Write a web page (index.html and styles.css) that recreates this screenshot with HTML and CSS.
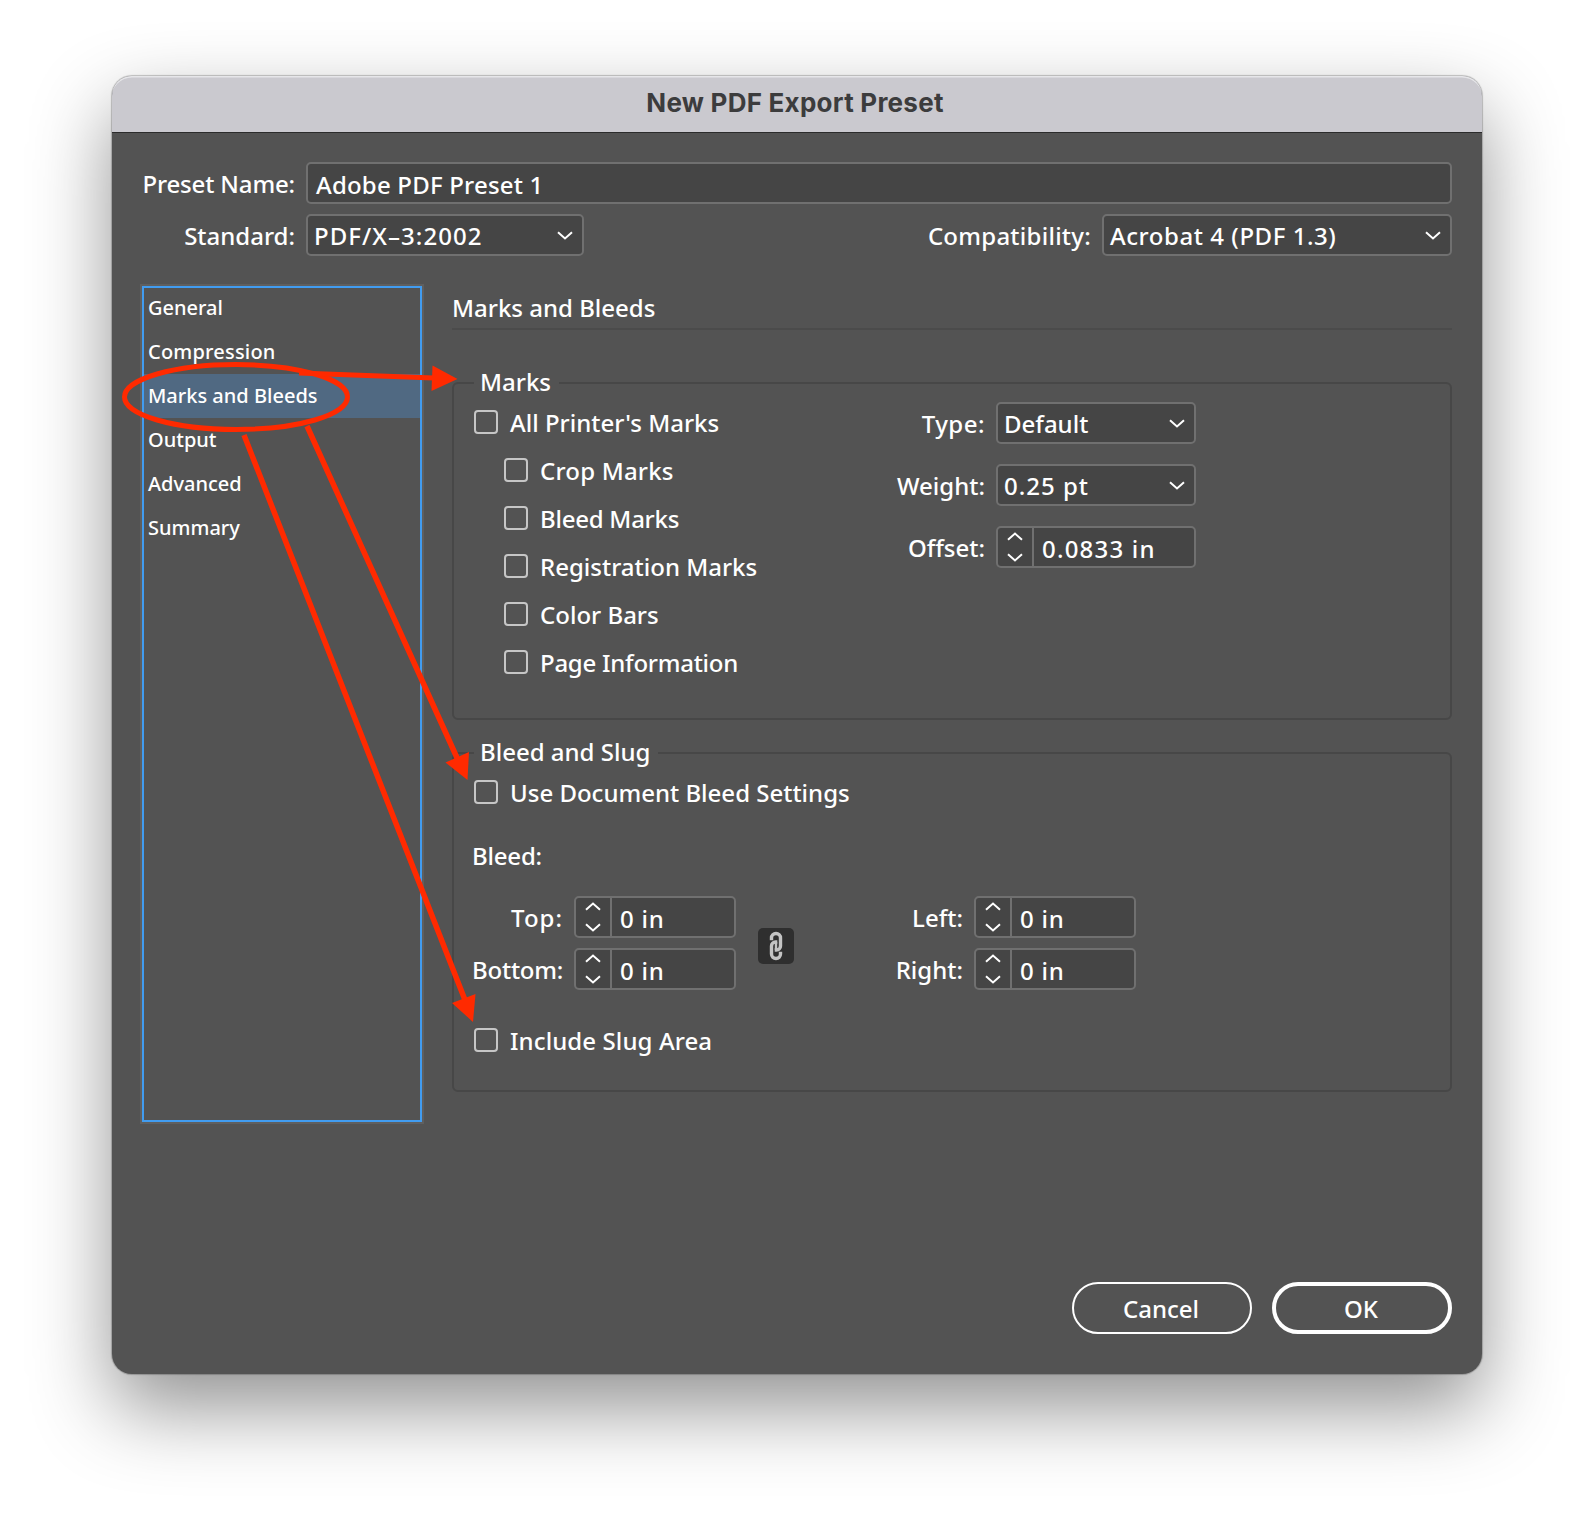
FILE: index.html
```html
<!DOCTYPE html>
<html lang="en">
<head>
<meta charset="utf-8">
<title>New PDF Export Preset</title>
<link rel="stylesheet" href="styles.css">
</head>
<body>
<svg class="defs" width="0" height="0">
  <symbol id="down" viewBox="0 0 16 9"><path d="M1 1.2 8 7.4 15 1.2" fill="none" stroke="#fff" stroke-width="2"/></symbol>
  <symbol id="up" viewBox="0 0 16 9"><path d="M1 7.8 8 1.6 15 7.8" fill="none" stroke="#fff" stroke-width="2"/></symbol>
</svg>
<main class="window">
  <header class="titlebar">New PDF Export Preset</header>
  <div class="content">
    <div class="row">
      <label class="label head-label">Preset Name:</label>
      <div class="field name"><span class="ls-name">Adobe PDF Preset 1</span></div>
    </div>
    <div class="row row-second">
      <label class="label head-label ls-label">Standard:</label>
      <div class="field select standard"><span class="ls-standard">PDF/X–3:2002</span><svg class="chev"><use href="#down"/></svg></div>
      <label class="label compat-label">Compatibility:</label>
      <div class="field select compat"><span class="ls-compat">Acrobat 4 (PDF 1.3)</span><svg class="chev"><use href="#down"/></svg></div>
    </div>
    <div class="panes">
      <nav class="sidebar">
        <div class="item first">General</div>
        <div class="item ls-item">Compression</div>
        <div class="item selected">Marks and Bleeds</div>
        <div class="item">Output</div>
        <div class="item">Advanced</div>
        <div class="item">Summary</div>
      </nav>
      <section class="pane">
        <h2 class="heading">Marks and Bleeds</h2>
        <fieldset class="group marks">
          <legend class="legend">Marks</legend>
          <div class="marks-body">
            <div class="checks">
              <label class="check"><i class="box"></i><span>All Printer's Marks</span></label>
              <label class="check sub"><i class="box"></i><span class="ls-item">Crop Marks</span></label>
              <label class="check sub"><i class="box"></i><span class="tight">Bleed Marks</span></label>
              <label class="check sub"><i class="box"></i><span>Registration Marks</span></label>
              <label class="check sub"><i class="box"></i><span>Color Bars</span></label>
              <label class="check sub"><i class="box"></i><span class="tight">Page Information</span></label>
            </div>
            <div class="options">
              <label class="label ls-type">Type:</label>
              <div class="field select"><span>Default</span><svg class="chev"><use href="#down"/></svg></div>
              <label class="label">Weight:</label>
              <div class="field select"><span class="ls-weight">0.25 pt</span><svg class="chev"><use href="#down"/></svg></div>
              <label class="label">Offset:</label>
              <div class="field spinner"><span class="steps"><svg class="step"><use href="#up"/></svg><svg class="step"><use href="#down"/></svg></span><span class="value ls-offset">0.0833 in</span></div>
            </div>
          </div>
        </fieldset>
        <fieldset class="group slug">
          <legend class="legend">Bleed and Slug</legend>
          <label class="check"><i class="box"></i><span>Use Document Bleed Settings</span></label>
          <div class="bleed-title">Bleed:</div>
          <div class="bleed">
            <div class="spinners first-pair">
              <label class="label ls-top">Top:</label>
              <div class="field spinner"><span class="steps"><svg class="step"><use href="#up"/></svg><svg class="step"><use href="#down"/></svg></span><span class="value">0 in</span></div>
              <label class="label tight">Bottom:</label>
              <div class="field spinner"><span class="steps"><svg class="step"><use href="#up"/></svg><svg class="step"><use href="#down"/></svg></span><span class="value">0 in</span></div>
            </div>
            <div class="link">
              <svg width="36" height="36" viewBox="0 0 36 36"><g fill="none" stroke="#c4c4c4" stroke-width="3.4"><path d="M13.500 12.300V10a4.500 4.500 0 0 1 9 0v8a4 4 0 0 1-4 4h-1.800"/><path d="M22.500 23.700V26a4.500 4.500 0 0 1-9 0v-8a4 4 0 0 1 4-4h1.800"/><path stroke-width="2.400" d="M18 14v8"/></g></svg>
            </div>
            <div class="spinners second-pair">
              <label class="label">Left:</label>
              <div class="field spinner"><span class="steps"><svg class="step"><use href="#up"/></svg><svg class="step"><use href="#down"/></svg></span><span class="value">0 in</span></div>
              <label class="label">Right:</label>
              <div class="field spinner"><span class="steps"><svg class="step"><use href="#up"/></svg><svg class="step"><use href="#down"/></svg></span><span class="value">0 in</span></div>
            </div>
          </div>
          <label class="check slug-check"><i class="box"></i><span>Include Slug Area</span></label>
        </fieldset>
      </section>
    </div>
    <footer class="actions">
      <button class="btn">Cancel</button>
      <button class="btn ok">OK</button>
    </footer>
  </div>
</main>
<svg class="notes" width="1594" height="1522" viewBox="0 0 1594 1522">
  <g fill="none" stroke="#ff2a00" stroke-width="5">
    <ellipse cx="236" cy="397" rx="111.500" ry="32.500"/>
    <path stroke-width="5" d="M299 373 434 378"/>
    <path stroke-width="5.500" d="M307 426 458 760M244 435 465 1000"/>
  </g>
  <g fill="#ff2a00">
    <path d="M432.500 365.500 431.500 391 457.500 379Z"/>
    <path d="M445.500 762.500 469 752 467.500 780Z"/>
    <path d="M452 1003 475.500 994 473 1022Z"/>
  </g>
</svg>
</body>
</html>
```
FILE: styles.css
```css
* { box-sizing: border-box; }
body {
  margin: 0;
  padding: 76px 0 0 112px;
  width: 1594px;
  height: 1522px;
  overflow: hidden;
  background: #fff;
  color: #fff;
  font: 500 24px/28px "Noto Sans", sans-serif;
  white-space: nowrap;
}
svg { display: block; }
.defs { position: absolute; }
.window {
  width: 1370px;
  height: 1298px;
  border-radius: 20px;
  background: #535353;
  box-shadow: 0 0 1px 1px rgba(0, 0, 0, .22), 0 34px 80px rgba(0, 0, 0, .43);
}
.titlebar {
  height: 57px;
  padding-right: 4px;
  border-radius: 20px 20px 0 0;
  border-bottom: 1px solid #2b2b2b;
  background: #cac9cf;
  box-shadow: inset 0 2px 0 -.5px #e6e6e9;
  color: #3c3c3d;
  font: 700 26px/54px Inter, sans-serif;
  letter-spacing: .25px;
  text-align: center;
}
.content { padding: 29px 30px 0 30px; }
.row { display: flex; align-items: center; }
.row-second { margin-top: 10px; }
.label { text-align: right; padding-top: 2px; }
.head-label { width: 153px; margin-right: 11px; letter-spacing: -.15px; }
.field {
  display: flex;
  align-items: center;
  height: 42px;
  border: 2px solid #707070;
  border-radius: 5px;
  background: #454545;
}
.name { flex: 1; padding: 3px 0 0 8px; }
.select { justify-content: space-between; padding: 0 9px 0 6px; }
.select span { padding-top: 2px; }
.chev { width: 16px; height: 9px; }
.standard { width: 278px; }
.compat-label { margin-left: auto; margin-right: 11px; letter-spacing: .25px; }
.compat { width: 350px; }
.ls-name { letter-spacing: .2px; }
.ls-label { letter-spacing: 0; }
.ls-standard { letter-spacing: 1.05px; }
.ls-compat { letter-spacing: .55px; }
.ls-weight { letter-spacing: 1px; }
.ls-item { letter-spacing: .2px; }
.ls-type { letter-spacing: .5px; }
.ls-top { letter-spacing: 1px; }
.tight { letter-spacing: -.25px; }

.panes { display: flex; gap: 30px; margin-top: 30px; }
.sidebar {
  width: 280px;
  height: 836px;
  border: 2px solid #419cf0;
  box-shadow: 0 0 0 2px #5f5f5f;
  font-size: 20px;
}
.item { height: 44px; padding-left: 4px; line-height: 44px; }
.first { height: 42px; line-height: 40px; }
.selected { background: #506982; }
.pane { width: 1000px; }
.heading {
  height: 44px;
  margin: 0;
  border-bottom: 2px solid #4b4b4b;
  font: inherit;
  line-height: 44px;
}
.group {
  min-width: 0;
  margin: 0;
  padding: 1px 20px 0;
  border: 2px solid #474747;
  border-radius: 6px;
}
.legend { height: 28px; padding: 0 8px 0 6px; line-height: 25px; }
.marks { height: 351px; margin-top: 39px; }
.slug { height: 353px; margin-top: 19px; }
.marks-body { display: flex; }
.checks { width: 386px; }
.check { display: flex; align-items: center; height: 48px; }
.check span { padding-top: 2px; }
.box {
  width: 24px;
  height: 24px;
  margin-right: 12px;
  border: 2px solid #c6c6c6;
  border-radius: 4px;
}
.sub { padding-left: 30px; }
.options {
  display: grid;
  grid-template-columns: 125px 200px;
  grid-auto-rows: 42px;
  gap: 20px 11px;
  align-content: start;
  align-items: center;
  padding-top: 4px;
}
.spinner { align-items: stretch; }
.steps {
  display: flex;
  flex-direction: column;
  align-items: center;
  justify-content: space-between;
  width: 36px;
  padding: 4px 0 4px;
  border-right: 2px solid #707070;
}
.step { width: 16px; height: 9px; }
.value { padding-left: 8px; line-height: 41px; letter-spacing: .8px; }
.ls-offset { letter-spacing: 1.2px; }
.bleed-title { height: 80px; margin-left: -2px; line-height: 79px; letter-spacing: -.2px; }
.bleed { display: flex; align-items: center; height: 94px; }
.spinners {
  display: grid;
  grid-template-columns: auto 162px;
  grid-auto-rows: 42px;
  gap: 10px 11px;
  align-items: center;
}
.first-pair { width: 265px; margin-left: -3px; }
.link {
  margin: 6px 0 0 22px;
  border-radius: 5px;
  background: #2f2f2f;
}
.second-pair { width: 262px; margin-left: 80px; }
.slug-check { margin-top: 26px; letter-spacing: .1px; }
.actions { display: flex; justify-content: flex-end; gap: 20px; margin-top: 160px; }
.btn {
  width: 180px;
  height: 52px;
  padding: 1px 2px 0 0;
  border: 2px solid #fff;
  border-radius: 26px;
  background: none;
  color: inherit;
  font: inherit;
}
.ok { border-width: 4px; }
.notes { position: absolute; left: 0; top: 0; pointer-events: none; }
```
